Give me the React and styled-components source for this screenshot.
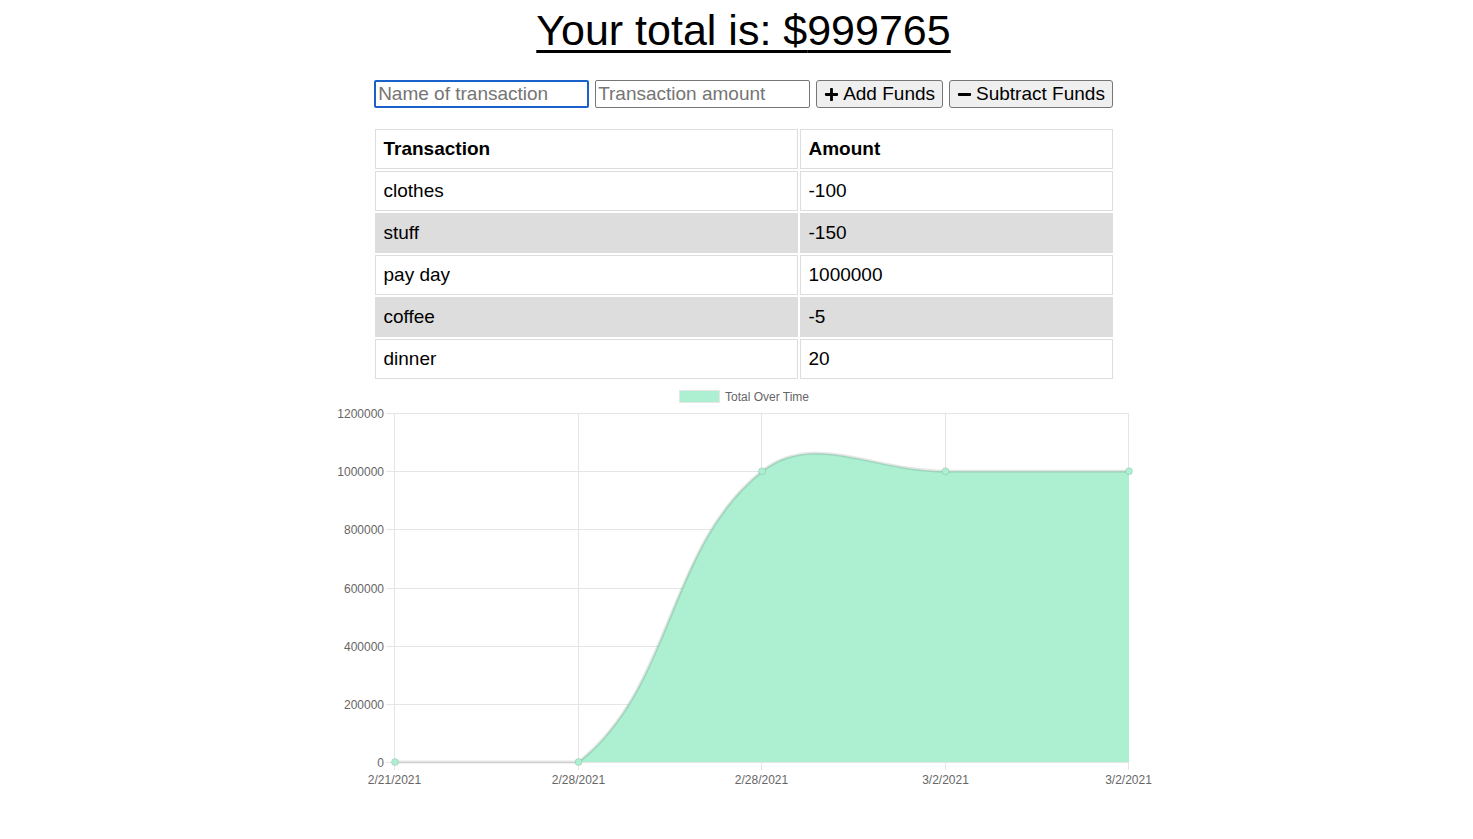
import React from "react";
import styled, { createGlobalStyle } from "styled-components";
import { FaPlus, FaMinus } from "react-icons/fa";

const GlobalStyle = createGlobalStyle`
  body {
    margin: 0;
    background: #fff;
    font-family: "Liberation Sans", Arial, sans-serif;
    color: #000;
  }
`;

const Page = styled.div`
  display: flex;
  flex-direction: column;
  align-items: center;
  padding-left: 14px;
`;

const Title = styled.h1`
  margin: 6px 0 0;
  font-size: 43px;
  font-weight: normal;
  text-decoration: underline;
  text-decoration-thickness: 3px;
  text-underline-offset: 5px;
  line-height: 1.15;
`;

const Form = styled.div`
  display: flex;
  gap: 6px;
  margin-top: 25px;
`;

const Input = styled.input`
  box-sizing: border-box;
  width: 215px;
  height: 28px;
  padding: 0 2px;
  font-family: "Liberation Sans", Arial, sans-serif;
  font-size: 19px;
  border: ${(p) => (p.$focused ? "2px solid #1a62c9" : "1px solid #767676")};
  border-radius: 2px;
  outline: none;
  &::placeholder {
    color: #757575;
  }
`;

const Button = styled.button`
  box-sizing: border-box;
  display: flex;
  align-items: center;
  gap: 4px;
  height: 28px;
  padding: 0 7px;
  font-family: "Liberation Sans", Arial, sans-serif;
  font-size: 19px;
  color: #000;
  background: #efefef;
  border: 1px solid #767676;
  border-radius: 3px;
  svg {
    font-size: 15px;
  }
`;

const Table = styled.table`
  margin-top: 19px;
  width: 742px;
  border-spacing: 2px;
  font-size: 19px;
`;

const Cell = styled.td`
  border: 1px solid #dddddd;
  padding: 8px 8px;
  height: 22px;
  text-align: left;
  font-weight: ${(p) => (p.$head ? "bold" : "normal")};
  width: ${(p) => p.$width || "auto"};
`;

const Row = styled.tr`
  background: ${(p) => (p.$shaded ? "#dddddd" : "#fff")};
`;

const ChartWrap = styled.div`
  width: 841px;
  height: 415px;
`;

const transactions = [
  { name: "clothes", value: -100, date: "2/21/2021" },
  { name: "stuff", value: -150, date: "2/28/2021" },
  { name: "pay day", value: 1000000, date: "2/28/2021" },
  { name: "coffee", value: -5, date: "3/2/2021" },
  { name: "dinner", value: 20, date: "3/2/2021" },
];

const PLOT = { left: 72, right: 806, top: 32, bottom: 381 };
const MAX = 1200000;

function splinePath(pts, tension) {
  const ctrl = pts.map((cur, i) => {
    const prev = pts[i - 1] || cur;
    const next = pts[i + 1] || cur;
    const d01 = Math.hypot(cur.x - prev.x, cur.y - prev.y);
    const d12 = Math.hypot(next.x - cur.x, next.y - cur.y);
    let s01 = d01 / (d01 + d12);
    let s12 = d12 / (d01 + d12);
    if (isNaN(s01)) s01 = 0;
    if (isNaN(s12)) s12 = 0;
    const fa = tension * s01;
    const fb = tension * s12;
    return {
      p: { x: cur.x - fa * (next.x - prev.x), y: cur.y - fa * (next.y - prev.y) },
      n: { x: cur.x + fb * (next.x - prev.x), y: cur.y + fb * (next.y - prev.y) },
    };
  });
  const clamp = (v, a, b) => Math.max(a, Math.min(b, v));
  ctrl.forEach((c) => {
    [c.p, c.n].forEach((q) => {
      q.x = clamp(q.x, PLOT.left, PLOT.right);
      q.y = clamp(q.y, PLOT.top, PLOT.bottom);
    });
  });
  let d = `M${pts[0].x},${pts[0].y}`;
  for (let i = 1; i < pts.length; i++) {
    const a = ctrl[i - 1].n;
    const b = ctrl[i].p;
    d += ` C${a.x},${a.y} ${b.x},${b.y} ${pts[i].x},${pts[i].y}`;
  }
  return d;
}

const Chart = ({ data }) => {
  let total = 0;
  const totals = data.map((t) => (total += t.value));
  const step = (PLOT.right - PLOT.left) / (data.length - 1);
  const yOf = (v) => PLOT.bottom - (v / MAX) * (PLOT.bottom - PLOT.top);
  const pts = totals.map((v, i) => ({ x: PLOT.left + i * step, y: yOf(v) }));
  const line = splinePath(pts, 0.4);
  const zero = yOf(0);
  const area = `${line} L${pts[pts.length - 1].x},${zero} L${pts[0].x},${zero} Z`;
  const ticks = [0, 200000, 400000, 600000, 800000, 1000000, 1200000];

  return (
    <ChartWrap>
      <svg width="841" height="415" viewBox="0 0 841 415" fontFamily="'Liberation Sans', Arial, sans-serif" fontSize="12">
        <rect x="356.5" y="9.5" width="40" height="12" fill="#adefd1" stroke="#e6e6e6" strokeWidth="1" />
        <text x="402" y="20" fill="#666">Total Over Time</text>

        {ticks.map((t) => {
          const y = Math.round(yOf(t)) + 0.5;
          return (
            <g key={t}>
              <line x1={PLOT.left - 9} x2={PLOT.right} y1={y} y2={y} stroke="#e5e5e5" />
              <text x={PLOT.left - 11} y={y + 4} textAnchor="end" fill="#666">
                {t}
              </text>
            </g>
          );
        })}
        {pts.map((p, i) => {
          const x = Math.round(p.x) - 0.5;
          return (
            <g key={i}>
              <line x1={x} x2={x} y1={PLOT.top} y2={PLOT.bottom + 8} stroke="#e5e5e5" />
              <text x={x} y={403} textAnchor="middle" fill="#666">
                {data[i].date}
              </text>
            </g>
          );
        })}

        <path d={area} fill="#adefd1" />
        <path d={line} fill="none" stroke="rgba(0,0,0,0.1)" strokeWidth="3" />
        {pts.map((p, i) => (
          <circle key={i} cx={p.x} cy={p.y} r="3.5" fill="#adefd1" stroke="rgba(0,0,0,0.1)" strokeWidth="1" />
        ))}
      </svg>
    </ChartWrap>
  );
};

const App = () => {
  const total = transactions.reduce((s, t) => s + t.value, 0);
  return (
    <>
      <GlobalStyle />
      <Page>
        <Title>Your total is: ${total}</Title>
        <Form>
          <Input $focused placeholder="Name of transaction" />
          <Input placeholder="Transaction amount" />
          <Button>
            <FaPlus /> Add Funds
          </Button>
          <Button>
            <FaMinus /> Subtract Funds
          </Button>
        </Form>
        <Table>
          <thead>
            <Row>
              <Cell as="th" $head $width="405px">Transaction</Cell>
              <Cell as="th" $head>Amount</Cell>
            </Row>
          </thead>
          <tbody>
            {transactions.map((t, i) => (
              <Row key={t.name} $shaded={i % 2 === 1}>
                <Cell>{t.name}</Cell>
                <Cell>{t.value}</Cell>
              </Row>
            ))}
          </tbody>
        </Table>
        <Chart data={transactions} />
      </Page>
    </>
  );
};

export default App;
